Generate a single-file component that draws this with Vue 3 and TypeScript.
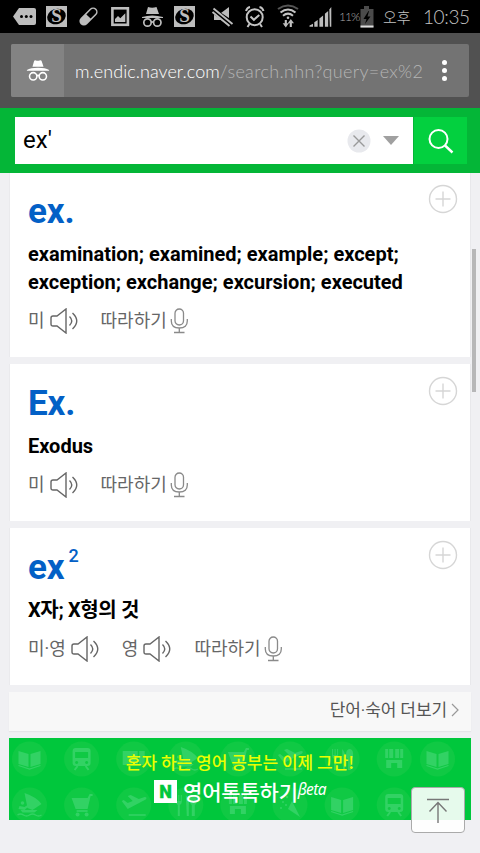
<script setup lang="ts">
interface Sound { label: string }
interface Entry { word: string; sup?: string; meaning: string; korean?: boolean; sounds: Sound[] }
interface Deco { icon: string; x: number; y: number }

const entries: Entry[] = [
  { word: 'ex.', meaning: 'examination; examined; example; except; exception; exchange; excursion; executed', sounds: [{ label: '미' }] },
  { word: 'Ex.', meaning: 'Exodus', sounds: [{ label: '미' }] },
  { word: 'ex', sup: '2', meaning: 'X자; X형의 것', korean: true, sounds: [{ label: '미·영' }, { label: '영' }] },
]

const rowOne = ['book', 'train', 'ticket', 'sail', 'cart', 'plane', 'fork', 'shop']
const rowTwo = ['sail', 'cart', 'plane', 'fork', 'shop', 'party', 'book', 'train']
const decos: Deco[] = [
  ...rowOne.map((icon, i) => ({ icon, x: 20.5 + i * 52.1, y: 21 })),
  { icon: 'book', x: 428.5, y: 21 },
  ...rowTwo.map((icon, i) => ({ icon, x: 20.5 + i * 52.1, y: 67 })),
]
</script>

<template>
  <div class="screen">
    <header class="status">
      <svg class="status-icons" viewBox="0 0 339 33" width="339" height="33" fill="#bdbdbd">
        <path d="M13 16.5 19 8H34q2 0 2 2V23q0 2-2 2H19Z" />
        <g fill="#000"><circle cx="21.5" cy="16.5" r="1.5" /><circle cx="26.3" cy="16.5" r="1.5" /><circle cx="31" cy="16.5" r="1.5" /></g>
        <g v-for="x in [46, 174]" :key="x">
          <rect :x="x" y="6" width="21" height="21" />
          <ellipse :cx="x + 10.5" cy="16.5" rx="9.5" ry="7.6" fill="#000" :transform="`rotate(-20 ${x + 10.5} 16.5)`" />
          <text :x="x + 10.5" y="22.3" class="s-mark" text-anchor="middle">S</text>
        </g>
        <g transform="rotate(-45 88.5 16.5)">
          <rect x="77.5" y="12" width="22" height="9" rx="4.5" />
          <path d="M88.5 13.5h6.5a3 3 0 0 1 0 6h-6.5Z" fill="#000" />
        </g>
        <rect x="112.4" y="8.3" width="15.5" height="16.5" fill="none" stroke="#bdbdbd" stroke-width="2.6" />
        <path d="M115 22V19l3-3 2.3 2.2 5-5V22Z" />
        <g fill="none" stroke="#bdbdbd" stroke-width="1.7"><circle cx="147.5" cy="22.5" r="3.7" /><circle cx="157.3" cy="22.5" r="3.7" /><path d="M151 22h3" /></g>
        <path d="M142 17q10-3 21 0v1H142ZM146 14l2-7q4 1.5 8.5 0l2.5 7Z" />
        <path d="M214 13h7l8-6v19l-8-6h-7Z" />
        <path d="m212 10 21 14" stroke="#000" stroke-width="5.500" /><path d="m213.500 8.500 19 15.500M212.500 12l17 14" stroke="#bdbdbd" stroke-width="1.900" />
        <g fill="none" stroke="#c4c4c4" stroke-width="2"><circle cx="254.700" cy="17.200" r="8" /><path d="m250.500 16.500 3.400 3.300 5.400-4.800M246 11q1-3.500 4-4M263.500 11q-1-3.500-4-4M249.500 24l-2 3M260 24l2 3" /></g>
        <g fill="none" stroke="#c4c4c4" stroke-width="2.100"><path d="M278 9q10-7 20 0" stroke="#555" /><path d="M280.500 12.500q7.500-6 15 0M283 15.700q5-4 10 0" /><path d="M285.800 20v6M290.800 27v-6" /></g>
        <circle cx="288" cy="17.800" r="1.300" /><path d="m282.700 23.300 3.100 4.300 3-4.300ZM287.800 23.300l3-4.300 3.200 4.300Z" />
        <path d="M309.500 26.800v-1.400l3.500-1.600v3ZM314.300 26.800v-4.500l3.400-2.400v6.900ZM319.400 26.800v-8.300l3.700-2.900v11.200ZM324.900 26.800V13.800l3.300-2.800v15.800ZM329.800 26.800 329.300 9.500l2-2.500v19.800Z" />
      </svg>
      <span class="percent">11%</span>
      <svg class="battery" viewBox="0 0 14 22" width="14" height="22"><path d="M4 0h5v3h4.500v18.500H.5V3H4Z" fill="#4b4b4b" /><path d="M8.500 5 3.500 13h3L5 18l5.500-7.500h-3L9 5Z" fill="#000" /><path d="M.5 19.500h13v2H.5Z" fill="#ddd" /></svg>
      <span class="ampm">오후</span>
      <span class="clock">10:35</span>
    </header>

    <div class="browser">
      <div class="omnibox">
        <div class="incognito">
          <svg viewBox="0 0 26 24" width="24" height="23" fill="#fff"><path d="M7 8 8.700 2q.6-1.500 2-.8 1.800.7 4 0 1.800-.7 2.300.8L19 8ZM1 11.500Q5 9 13 9t12 2.500v.7H1Z" /><g fill="none" stroke="#fff" stroke-width="1.700"><circle cx="7.800" cy="18.300" r="4" /><circle cx="18.200" cy="18.300" r="4" /><path d="M11.500 17.800q1.500-1 3 0" /></g></svg>
        </div>
        <div class="url"><span class="host">m.endic.naver.com</span><span class="path">/search.nhn?query=ex%2</span></div>
        <div class="dots"><i></i><i></i><i></i></div>
      </div>
    </div>

    <div class="search">
      <div class="field">
        <span class="query">ex'</span>
        <svg class="clear" viewBox="0 0 24 24" width="24" height="24"><circle cx="12" cy="12" r="11.500" fill="#e8e9ed" /><path d="m6.500 6.500 11 11m0-11-11 11" stroke="#999" stroke-width="1.400" /></svg>
        <svg class="arrow" viewBox="0 0 16 9" width="16" height="9"><path d="M0 0h16L8 9Z" fill="#a0a0a0" /></svg>
      </div>
      <button class="go" aria-label="검색">
        <svg viewBox="0 0 26 26" width="26" height="26" fill="none" stroke="#fff" stroke-width="2"><circle cx="10.500" cy="11" r="9" /><path d="m17 17.500 7.500 7" stroke-width="2.400" /></svg>
      </button>
    </div>

    <main class="content">
      <article v-for="entry in entries" :key="entry.word" class="card">
        <svg class="plus" viewBox="0 0 30 30" width="30" height="30" fill="none" stroke="#d6d6d6" stroke-width="1.400"><circle cx="15" cy="15" r="13.500" /><path d="M7.500 15h15M15 7.500v15" /></svg>
        <h2>{{ entry.word }}<sup v-if="entry.sup">{{ entry.sup }}</sup></h2>
        <p class="meaning" :class="{ korean: entry.korean }">{{ entry.meaning }}</p>
        <div class="sounds">
          <span v-for="sound in entry.sounds" :key="sound.label" class="sound">
            {{ sound.label }}
            <svg viewBox="0 0 28 26" width="28" height="26" fill="none" stroke="#666" stroke-width="1.400"><path d="M1 10q0-2 2-2h4l9-7v24l-9-7H3q-2 0-2-2Z" /><path d="M19.500 8.500q4.500 4.500 0 9M22.500 5q8.500 8 0 16" /></svg>
          </span>
          <span class="repeat">
            따라하기
            <svg viewBox="0 0 18 26" width="18" height="26" fill="none" stroke="#8a8a8a" stroke-width="1.300"><rect x="5" y="1" width="8.500" height="16" rx="4.250" /><path d="M1.300 11v2q0 7 8 7t8-7v-2M9.300 20v4.500M4 24.500h10.500" /></svg>
          </span>
        </div>
      </article>

      <div class="more">단어·숙어 더보기<svg viewBox="0 0 8 14" width="8" height="14" fill="none" stroke="#999" stroke-width="1.200"><path d="m1 1 6 6-6 6" /></svg></div>

      <section class="banner">
        <svg class="pattern" viewBox="0 0 462 82" width="462" height="82">
          <defs>
            <g id="book"><path d="M-11-8-1-5V8L-11 5ZM11-8 1-5V8L11 5Z" /><path d="m-11 6.500 11 3.500 11-3.500" fill="none" stroke="#32d264" stroke-width="1.300" /></g>
            <g id="train"><path fill-rule="evenodd" d="M-6-11H6q3 0 3 3V4q0 3-3 3H-6q-3 0-3-3V-8q0-3 3-3ZM-6.500-7V-1h13v-6ZM-5 2a1.500 1.500 0 1 0 .1 0ZM5 2a1.500 1.500 0 1 0 .1 0Z" /><path d="m-4 7-3 4M4 7l3 4" stroke="#32d264" stroke-width="2" /></g>
            <g id="ticket"><path d="M-11-8h15V6h-15ZM5.500-8H11V6H5.500Z" /></g>
            <g id="sail"><path d="M-5-12Q7-8 12-1L3 5-2 3ZM-10 1l5 1 3-2 1 1.500-4 3.500-6-1ZM-9 5h17l-3 2.500h-12Z" /><circle cx="-7" cy="-2" r="1.800" /><path d="M-12 10q3-2 6 0t6 0 6 0 6 0" fill="none" stroke="#32d264" stroke-width="1.500" /></g>
            <g id="cart"><path d="M-10-7H6l2-4h3v2H9L6 4H-6Z" /><path d="M-5 6H6" stroke="#32d264" stroke-width="1.800" /><circle cx="-4" cy="9.500" r="2" /><circle cx="5" cy="9.500" r="2" /></g>
            <g id="plane"><path d="m-12-4 2-1 4 3 5-2-5-5 3-1 8 4 6-2q3 0 1 2.500L-6 4Z" /><path d="M-5 10h17" stroke="#32d264" stroke-width="1.600" /></g>
            <g id="fork"><path d="M-10-10v7q0 2 2 3v11h2V0q2-1 2-3v-7h-1v6h-1.500v-6h-1v6H-9v-6ZM0-10q4 4 3 11v10H1ZM7-10q4 0 4 5 0 4-2 5v11H6V0Q4-1 4-5t3-5Z" /></g>
            <g id="shop"><path d="M-9-10h3v9h-3ZM-5-10h4v9h-4ZM1-10h4v9H1ZM6-10h3v9H6ZM-8 1H8V9H3V4h-6v5h-5Z" /></g>
            <g id="party"><path d="m2-4-4 8 12 8Z" /><circle cx="-7" cy="-3" r="1" /><circle cx="-3" cy="-8" r="1.200" /><circle cx="-9" cy="3" r="1" /><circle cx="-4" cy="0" r="1" /></g>
          </defs>
          <g v-for="(deco, i) in decos" :key="i" :transform="`translate(${deco.x} ${deco.y})`">
            <circle r="17.500" fill="#10c944" />
            <use :href="`#${deco.icon}`" fill="#32d264" />
          </g>
        </svg>
        <p class="pitch">혼자 하는 영어 공부는 이제 그만!</p>
        <p class="brand"><span class="n">N</span><span class="name">영어톡톡하기</span><em>βeta</em></p>
      </section>
      <h3 class="next">본문</h3>
    </main>

    <div class="scroll"></div>
    <button class="top" aria-label="맨 위로">
      <svg viewBox="0 0 22 25" width="22" height="25" fill="none" stroke="#777" stroke-width="1.400"><path d="M0 1.500h22M11 4.500V25M2.500 13.500 11 4.500l8.500 9" /></svg>
    </button>
  </div>
</template>

<style>
body { margin: 0; overflow: hidden; }
</style>

<style scoped>
* { box-sizing: border-box; }
.screen { position: relative; width: 480px; height: 853px; overflow: hidden; background: #f0f0f3; font-family: Roboto, "Noto Sans CJK KR", sans-serif; color: #000; }
p, h2, h3 { margin: 0; }
button { border: 0; padding: 0; }
svg { display: block; flex: none; }
.status { height: 33px; background: #000; display: flex; align-items: center; color: #c4c4c4; }
.s-mark { font: 900 19px "Liberation Serif", serif; }
.percent { width: 21px; font: 300 12px/33px Lato, sans-serif; letter-spacing: -1px; color: #aaa; }
.battery { margin-right: 9px; }
.ampm { width: 40px; font: 300 15px/33px "Noto Sans CJK KR", sans-serif; white-space: nowrap; }
.clock { font: 300 19px/35px Lato, sans-serif; letter-spacing: -.4px; white-space: nowrap; }
.browser { height: 75px; background: #515151; padding: 11px; }
.omnibox { height: 53px; display: flex; align-items: center; background: #737373; border-radius: 2px; }
.incognito { width: 53px; height: 53px; display: grid; place-items: center; background: #838383; border-radius: 2px 0 0 2px; }
.url { margin-left: 11px; width: 348px; white-space: nowrap; font: 300 18px/30px Lato, sans-serif; }
.host { color: #fff; letter-spacing: .05px; }
.path { color: #b5b5b5; letter-spacing: .35px; }
.dots { margin-left: 19px; display: grid; gap: 3px; }
.dots i { width: 5px; height: 5px; border-radius: 50%; background: #fff; }
.search { height: 65px; background: #04b637; padding: 9px 13px 9px 15px; display: flex; gap: 1px; }
.field { width: 398px; background: #fff; display: flex; align-items: center; padding: 0 14px 0 8px; }
.query { font-size: 24px; line-height: 47px; flex: 1; }
.clear { margin-right: 12px; }
.go { flex: 1; background: #03d03f; display: grid; place-items: center; }
.content { padding: 0 9px; display: flex; flex-direction: column; gap: 7px; }
.card { position: relative; background: #fff; border-right: 1px solid #e8e8eb; border-left: 1px solid #eaeaed; height: 157px; padding: 18px 58px 0 18px; }
.card:first-child { height: 184px; padding-top: 17px; }
.plus { position: absolute; right: 12px; top: 12px; }
.card:first-child .plus { top: 11px; }
h2 { height: 43px; font-size: 35px; line-height: 43px; font-weight: 700; color: #0360c6; display: flex; letter-spacing: -.1px; }
sup { font-size: 18px; line-height: 20px; font-weight: 500; margin-left: 4px; }
.meaning { margin-top: 7px; font-size: 20px; line-height: 28px; font-weight: 700; }
.korean { letter-spacing: -.35px; }
.sounds { margin-top: 12px; display: flex; height: 26px; gap: 23px; color: #666; font: 400 18px/26px Roboto, "Noto Sans CJK KR", sans-serif; }
.sound { display: flex; gap: 5px; }
.repeat { display: flex; gap: 3px; }
.more { height: 39px; background: #f8f8f8; box-shadow: 0 1px 1px #e5e5e8; display: flex; align-items: center; justify-content: flex-end; gap: 4px; padding: 0 12px 3px 0; font: 400 17px/36px Roboto, "Noto Sans CJK KR", sans-serif; letter-spacing: -.1px; color: #555; }
.banner { position: relative; height: 82px; background: #00c73c; padding-top: 11px; display: flex; flex-direction: column; align-items: center; overflow: hidden; }
.pattern { position: absolute; left: 0; top: 0; }
.pitch { position: relative; height: 26px; font: 500 17px/26px "Noto Sans CJK KR", sans-serif; color: #eaff00; white-space: nowrap; }
.brand { position: relative; height: 32px; display: flex; align-items: center; color: #fff; white-space: nowrap; }
.n { width: 23px; height: 23px; background: #fff; color: #00c73c; font: 900 18px/23px Roboto, sans-serif; -webkit-text-stroke: .3px #00c73c; text-align: center; }
.name { margin-left: 6px; font: 500 21px/32px "Noto Sans CJK KR", sans-serif; letter-spacing: -.2px; }
em { margin: -5px 0 0; font: italic 400 15.500px/26px "Noto Sans", sans-serif; letter-spacing: -.6px; }
.next { margin: 20px 0 0 5px; font: 500 22px/26px "Noto Sans CJK KR", sans-serif; color: #777; }
.scroll { position: absolute; right: 4px; top: 249px; width: 4px; height: 143px; background: #b7b7b8; }
.top { position: absolute; left: 411px; top: 787px; width: 54px; height: 46px; background: rgba(255,255,255,.9); border: 1px solid #aaa; border-radius: 4px; display: grid; place-items: center; }
</style>
